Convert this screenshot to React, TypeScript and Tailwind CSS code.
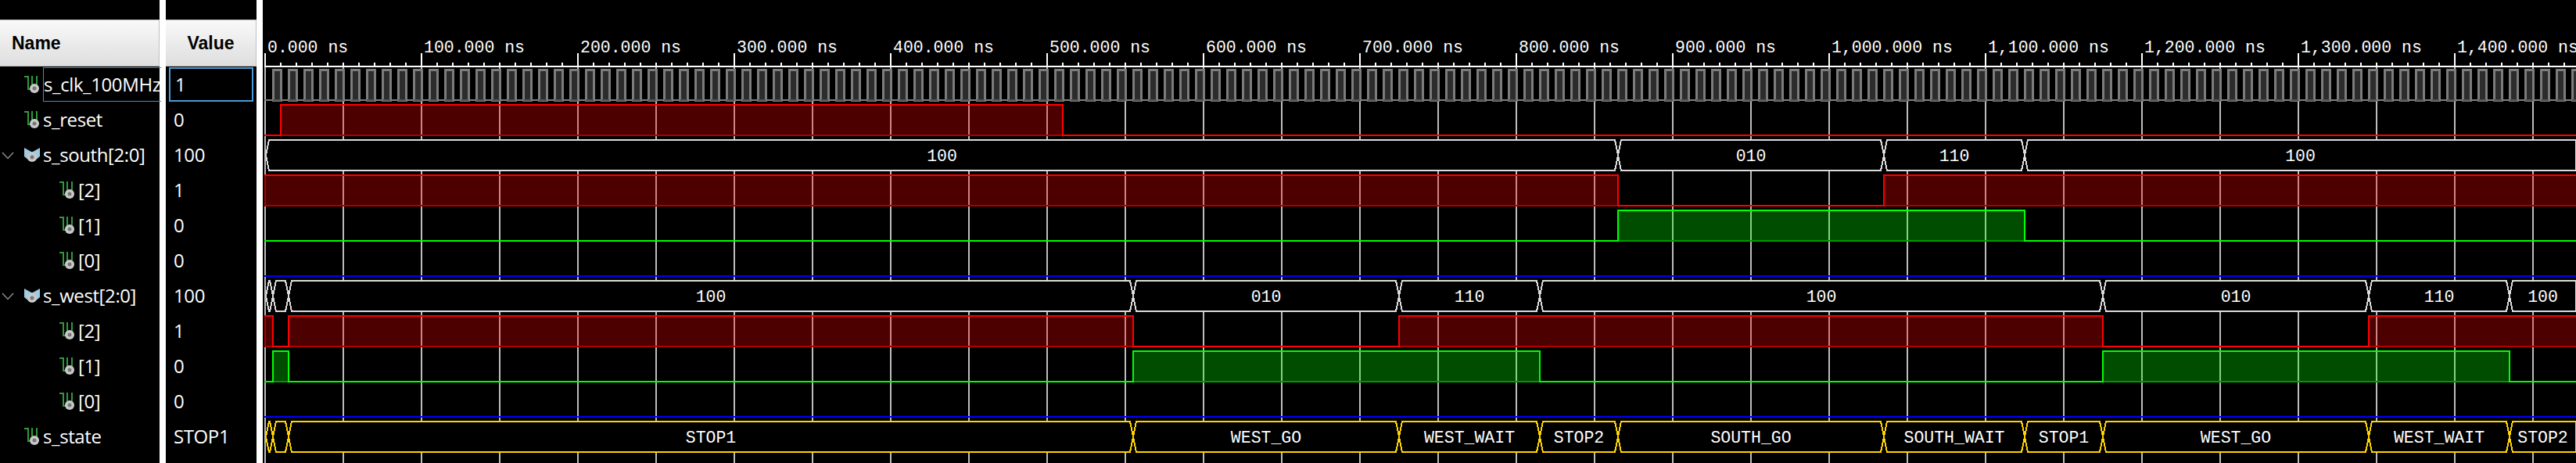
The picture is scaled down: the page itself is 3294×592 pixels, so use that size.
const END = 3294;
const T0 = 339;

type Row = { name: string; value: string; depth: 0 | 1; bus?: boolean; selected?: boolean };

const rows: Row[] = [
  { name: 's_clk_100MHz', value: '1', depth: 0, selected: true },
  { name: 's_reset', value: '0', depth: 0 },
  { name: 's_south[2:0]', value: '100', depth: 0, bus: true },
  { name: '[2]', value: '1', depth: 1 },
  { name: '[1]', value: '0', depth: 1 },
  { name: '[0]', value: '0', depth: 1 },
  { name: 's_west[2:0]', value: '100', depth: 0, bus: true },
  { name: '[2]', value: '1', depth: 1 },
  { name: '[1]', value: '0', depth: 1 },
  { name: '[0]', value: '0', depth: 1 },
  { name: 's_state', value: 'STOP1', depth: 0 },
];

const timeLabels = [
  '0.000 ns', '100.000 ns', '200.000 ns', '300.000 ns', '400.000 ns', '500.000 ns', '600.000 ns', '700.000 ns',
  '800.000 ns', '900.000 ns', '1,000.000 ns', '1,100.000 ns', '1,200.000 ns', '1,300.000 ns', '1,400.000 ns',
];

const range = (from: number, to: number, step: number) => {
  const out: number[] = [];
  for (let x = from; x < to; x += step) out.push(x);
  return out;
};

function SignalIcon() {
  return (
    <svg width="22" height="24" viewBox="0 0 22 24" className="shrink-0">
      <path d="M1 2H6V18H11" fill="none" stroke="#2f9a3c" strokeWidth="2" />
      <path d="M11 1V12M17 1V12" fill="none" stroke="#2f9a3c" strokeWidth="2" />
      <circle cx="14" cy="17" r="6" fill="#c9c9c9" />
      <circle cx="14" cy="17" r="2.5" fill="#777777" />
    </svg>
  );
}

function BusIcon() {
  return (
    <svg width="22" height="24" viewBox="0 0 22 24" className="shrink-0">
      <path d="M1 3L10 8H12L21 3V14L15 19H7L1 14Z" fill="#9fcbe3" />
      <circle cx="11" cy="15" r="6" fill="#c9c9c9" />
      <circle cx="11" cy="15" r="2.5" fill="#777777" />
    </svg>
  );
}

function Chevron() {
  return (
    <svg width="16" height="10" viewBox="0 0 16 10" className="absolute left-[2px] top-[19px]">
      <path d="M1 1L8 8.5L15 1" fill="none" stroke="#8a8a8a" strokeWidth="1.5" />
    </svg>
  );
}

function NameRow({ row }: { row: Row }) {
  return (
    <div className={`relative flex h-[45px] items-center ${row.depth ? 'pl-[75px]' : 'pl-[30px]'}`}>
      {row.bus && <Chevron />}
      {row.bus ? <BusIcon /> : <SignalIcon />}
      <span
        className={`ml-[3px] flex h-[44px] flex-1 items-center whitespace-nowrap text-[24px] tracking-[-0.4px] text-white ${
          row.selected ? 'border-y border-l border-[#3f8fcc]' : ''
        }`}
      >
        {row.name}
      </span>
    </div>
  );
}

function ValueRow({ row }: { row: Row }) {
  return (
    <div className="flex h-[45px] items-center px-[4px]">
      <span
        className={`flex h-[44px] flex-1 items-center whitespace-nowrap pl-[6px] text-[24px] tracking-[-0.4px] text-white ${
          row.selected ? 'border-2 border-[#4a9bd9] pl-[4px]' : ''
        }`}
      >
        {row.value}
      </span>
    </div>
  );
}

// one bit signal, edges are x positions of the level changes
function Bit({
  top,
  startHigh,
  edges,
  line,
  fill,
  dim,
}: {
  top: number;
  startHigh: boolean;
  edges: number[];
  line: string;
  fill: string;
  dim: string;
}) {
  const bottom = top + 39;
  const xs = [T0, ...edges, END];
  let high = startHigh;
  let d = `M${T0 - 1} ${high ? top : bottom}`;
  const blocks: [number, number][] = [];
  for (let i = 0; i < xs.length - 1; i++) {
    if (high) blocks.push([xs[i], xs[i + 1]]);
    d += `H${xs[i + 1]}`;
    if (i < xs.length - 2) {
      high = !high;
      d += `V${high ? top : bottom}`;
    }
  }
  return (
    <g>
      {blocks.map(([a, b]) => (
        <rect key={a} x={a} y={top} width={b - a} height={39} fill={fill} fillOpacity={0.3} />
      ))}
      {blocks.map(([a, b]) => (
        <path key={a} d={`M${a} ${top}V${bottom}H${b}`} fill="none" stroke={dim} strokeWidth={2} />
      ))}
      <path d={d} fill="none" stroke={line} strokeWidth={2} />
    </g>
  );
}

type Seg = { to: number; label?: string };

// bus value lane: black hexagons, so the grid does not show through them
function Bus({ top, segs, color }: { top: number; segs: Seg[]; color: string }) {
  const bottom = top + 39;
  const mid = top + 19.5;
  const slope = 4;
  let from = T0 + 1;
  return (
    <g>
      {segs.map((s, i) => {
        const a = from;
        from = s.to;
        const open = s.to >= END;
        const right = open ? `H${END}V${bottom}` : `H${s.to - slope}L${s.to} ${mid}L${s.to - slope} ${bottom}`;
        const d = `M${a} ${mid}L${a + slope} ${top}${right}H${a + slope}Z`;
        return (
          <g key={i}>
            <path d={d} fill="#000000" stroke={color} strokeWidth={2} />
            {s.label && (
              <text
                x={(a + Math.min(s.to, END)) / 2}
                y={mid + 7}
                textAnchor="middle"
                fill="#ffffff"
                className="text-[21.5px]"
                fontFamily="'Liberation Mono', monospace"
              >
                {s.label}
              </text>
            )}
          </g>
        );
      })}
    </g>
  );
}

function Wave() {
  const southBus: Seg[] = [
    { to: 2069, label: '100' },
    { to: 2409, label: '010' },
    { to: 2589, label: '110' },
    { to: END, label: '100' },
  ];
  const westBus: Seg[] = [
    { to: 349 },
    { to: 369 },
    { to: 1449, label: '100' },
    { to: 1789, label: '010' },
    { to: 1969, label: '110' },
    { to: 2689, label: '100' },
    { to: 3029, label: '010' },
    { to: 3209, label: '110' },
    { to: END, label: '100' },
  ];
  const stateBus: Seg[] = [
    { to: 349 },
    { to: 369 },
    { to: 1449, label: 'STOP1' },
    { to: 1789, label: 'WEST_GO' },
    { to: 1969, label: 'WEST_WAIT' },
    { to: 2069, label: 'STOP2' },
    { to: 2409, label: 'SOUTH_GO' },
    { to: 2589, label: 'SOUTH_WAIT' },
    { to: 2689, label: 'STOP1' },
    { to: 3029, label: 'WEST_GO' },
    { to: 3209, label: 'WEST_WAIT' },
    { to: END, label: 'STOP2' },
  ];
  const red = { line: '#ff0000', fill: '#ff0000', dim: '#b00000' };
  const green = { line: '#00ff00', fill: '#00ff00', dim: '#009a00' };

  return (
    <svg width="2958" height="592" viewBox="336 0 2958 592" shapeRendering="crispEdges" className="block">
      {/* ruler */}
      {timeLabels.map((t, i) => (
        <text
          key={t}
          x={T0 + 3 + i * 200}
          y={67}
          fill="#ffffff"
          className="text-[21.5px]"
          fontFamily="'Liberation Mono', monospace"
        >
          {t}
        </text>
      ))}
      {range(T0, END, 20).map((x) => (
        <path key={x} d={`M${x} 80V85`} stroke="#ffffff" strokeWidth={2} />
      ))}
      {range(T0, END, 200).map((x) => (
        <path key={x} d={`M${x} 68V85`} stroke="#ffffff" strokeWidth={2} />
      ))}
      {range(T0, END, 100).map((x) => (
        <path key={x} d={`M${x} 85V592`} stroke="#bdbdbd" strokeWidth={2} />
      ))}
      <path d={`M338 85H${END}`} stroke="#ffffff" strokeWidth={2} />

      {/* clock */}
      <path d={`M338 128H${END}`} stroke="#808080" strokeWidth={2} />
      {range(349, END, 20).map((x) => (
        <g key={x}>
          <rect x={x} y={89} width={10} height={39} fill="#2c2c2c" stroke="#7c7c7c" strokeWidth={3} />
          <path d={`M${x} 128H${x + 10}`} stroke="#555555" strokeWidth={2} />
        </g>
      ))}

      <Bit top={134} startHigh={false} edges={[359, 1359]} {...red} />
      <Bus top={179} segs={southBus} color="#dcdcdc" />
      <Bit top={224} startHigh edges={[2069, 2409]} {...red} />
      <Bit top={269} startHigh={false} edges={[2069, 2589]} {...green} />
      <path d={`M338 353H${END}`} stroke="#0000ff" strokeWidth={2} />
      <Bus top={359} segs={westBus} color="#dcdcdc" />
      <Bit top={404} startHigh edges={[349, 369, 1449, 1789, 2689, 3029]} {...red} />
      <Bit top={449} startHigh={false} edges={[349, 369, 1449, 1969, 2689, 3209]} {...green} />
      <path d={`M338 533H${END}`} stroke="#0000ff" strokeWidth={2} />
      <Bus top={539} segs={stateBus} color="#ffd400" />
    </svg>
  );
}

export default function App() {
  return (
    <div className="flex h-[592px] w-[3294px] overflow-hidden bg-black font-['Open_Sans',sans-serif]">
      <div className="w-[204px] shrink-0 pt-[25px]">
        <div className="flex h-[60px] items-center border-y border-r border-[#bfbfbf] bg-gradient-to-b from-[#f9f9f9] to-[#dedede] pl-[15px] font-['Liberation_Sans',sans-serif] text-[23px] font-bold text-black">
          Name
        </div>
        {rows.map((r, i) => (
          <NameRow key={i} row={r} />
        ))}
      </div>
      <div className="w-[8px] shrink-0 bg-white" />
      <div className="w-[116px] shrink-0 pt-[25px]">
        <div className="flex h-[60px] items-center justify-center border-y border-r border-[#bfbfbf] bg-gradient-to-b from-[#f9f9f9] to-[#dedede] font-['Liberation_Sans',sans-serif] text-[23px] font-bold text-black">
          Value
        </div>
        {rows.map((r, i) => (
          <ValueRow key={i} row={r} />
        ))}
      </div>
      <div className="w-[8px] shrink-0 bg-white" />
      <div className="min-w-0 flex-1">
        <Wave />
      </div>
    </div>
  );
}
